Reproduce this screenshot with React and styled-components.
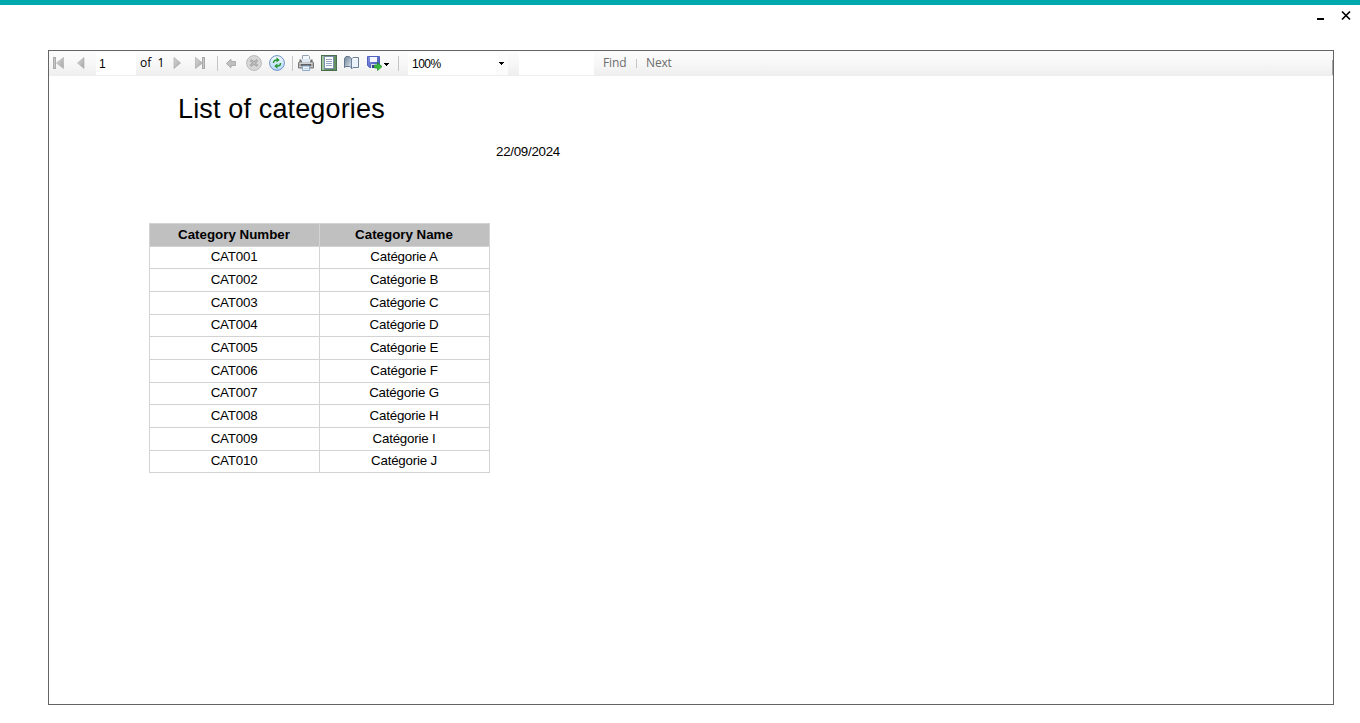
import React from "react";
import styled, { createGlobalStyle } from "styled-components";

const GlobalStyle = createGlobalStyle`
  * { box-sizing: border-box; }
  html, body { margin: 0; padding: 0; background: #fff; }
`;

const Window = styled.div`
  width: 1360px;
  height: 723px;
  display: flex;
  flex-direction: column;
  border-top: 5px solid #00a9ad;
  background: #fff;
  color: #000;
  overflow: hidden;
`;

const TitleBar = styled.div`
  height: 45px;
  flex: none;
  display: flex;
  justify-content: flex-end;
  gap: 17px;
  padding: 5px 9px 0 0;
`;

const Viewer = styled.div`
  width: 1286px;
  height: 655px;
  margin-left: 48px;
  flex: none;
  border: 1px solid #646464;
`;

const Toolbar = styled.div`
  height: 25px;
  display: flex;
  align-items: center;
  padding-left: 1px;
  background: linear-gradient(#fcfcfc, #f8f8f8 45%, #eeeeee);
  font: 12px/24px "Open Sans", "Noto Sans", sans-serif;
`;

const ToolButton = styled.div`
  width: ${(p) => p.$width || 23}px;
  height: 25px;
  flex: none;
  display: flex;
  align-items: center;
  svg { display: block; margin-top: -1px; }
`;

const Separator = styled.div`
  width: 1px;
  height: ${(p) => p.$height || 15}px;
  flex: none;
  margin: 0 ${(p) => p.$after}px 0 ${(p) => p.$before || 0}px;
  background: #c5c5c5;
`;

const Field = styled.div`
  width: ${(p) => p.$width}px;
  height: 22px;
  flex: none;
  display: flex;
  align-items: center;
  justify-content: space-between;
  margin-right: ${(p) => p.$after || 0}px;
  padding-left: ${(p) => p.$inset}px;
  background: #fff;
  font: 12px/22px "Liberation Sans", Arial, sans-serif;
  letter-spacing: ${(p) => p.$spacing || 0}px;
`;

const DropArea = styled.span`
  width: 12px;
  height: 22px;
  display: flex;
  align-items: center;
  justify-content: center;
  padding-right: 2px;
  background: #fcfcfc;
`;

const PageCount = styled.div`
  width: 33px;
  flex: none;
  padding: 0 0 1px 4px;
  white-space: pre;
`;

const TextCommand = styled.div`
  width: ${(p) => p.$width}px;
  flex: none;
  padding-bottom: 1px;
  color: #6d6d6d;
  letter-spacing: -0.15px;
`;

const ToolbarEdge = styled.div`
  width: 1px;
  height: 15px;
  margin-left: auto;
  margin-top: 7px;
  background: #a5a5a5;
`;

const Report = styled.div`
  padding-left: 100px;
  font-family: "Liberation Sans", Arial, sans-serif;
  font-size: 13.33px;
`;

const Title = styled.h1`
  margin: 0;
  padding: 17px 0 0 29px;
  font-size: 27px;
  line-height: 32px;
  font-weight: 400;
  letter-spacing: 0.15px;
`;

const ReportDate = styled.div`
  padding: 18px 0 0 347px;
  line-height: 17px;
  letter-spacing: -0.28px;
`;

const Table = styled.div`
  width: 341px;
  margin-top: 63px;
  border-top: 1px solid #d3d3d3;
  border-left: 1px solid #d3d3d3;
`;

const Row = styled.div`
  display: grid;
  grid-template-columns: 170px 170px;
  height: ${(p) => p.$height}px;
`;

const Cell = styled.div`
  border-right: 1px solid #d3d3d3;
  border-bottom: 1px solid #d3d3d3;
  padding-top: ${(p) => p.$top || 2}px;
  padding-right: 1px;
  line-height: 16px;
  text-align: center;
  letter-spacing: -0.2px;
`;

const HeaderCell = styled(Cell)`
  padding-top: 3px;
  background: #c0c0c0;
  font-weight: 700;
  letter-spacing: 0;
`;

const Icon = ({ children, width = 16 }) => (
  <svg width={width} height="16" viewBox={`0 0 ${width} 16`}>{children}</svg>
);

const Shades = () => (
  <svg width="0" height="0" style={{ position: "absolute" }}>
    <defs>
      <linearGradient id="gray" x1="0" x2="1" y1="0" y2="1">
        <stop offset="0" stopColor="#d8d8d8" />
        <stop offset="1" stopColor="#a4a4a4" />
      </linearGradient>
      <linearGradient id="disc" x1="0" x2="0" y1="0" y2="1">
        <stop offset="0" stopColor="#f2f9ff" />
        <stop offset="1" stopColor="#b4d8fb" />
      </linearGradient>
      <linearGradient id="green" x1="0" x2="1" y1="0" y2="0">
        <stop offset="0" stopColor="#a9cba5" />
        <stop offset="1" stopColor="#5c8a5b" />
      </linearGradient>
      <linearGradient id="page" x1="0" x2="1" y1="0" y2="1">
        <stop offset="0" stopColor="#6f8399" />
        <stop offset="1" stopColor="#dce6f0" />
      </linearGradient>
      <linearGradient id="disk" x1="0" x2="1" y1="0" y2="1">
        <stop offset="0" stopColor="#8596e6" />
        <stop offset="1" stopColor="#3d4fb4" />
      </linearGradient>
    </defs>
  </svg>
);

const FirstIcon = () => (
  <Icon>
    <rect x="3.5" y="2.5" width="2" height="11" fill="#c8c8c8" stroke="#ababab" />
    <path d="M13.5 2.5v11L6.5 8z" fill="url(#gray)" stroke="#b3b3b3" strokeWidth=".7" />
  </Icon>
);
const PrevIcon = () => (
  <Icon><path d="M11 2.5v11L4.5 8z" fill="url(#gray)" stroke="#b3b3b3" strokeWidth=".7" /></Icon>
);
const NextIcon = () => (
  <Icon><path d="M5 2.5v11L11.5 8z" fill="url(#gray)" stroke="#ababab" strokeWidth=".7" /></Icon>
);
const LastIcon = () => (
  <Icon>
    <path d="M3.5 2.5v11l7-5.5z" fill="url(#gray)" stroke="#ababab" strokeWidth=".7" />
    <rect x="10.5" y="2.5" width="2" height="11" fill="#c8c8c8" stroke="#a8a8a8" />
  </Icon>
);
const BackIcon = () => (
  <Icon><path d="M3.3 8.5 8 4.2v2.3h4.5v4H8v2.3z" fill="#c0c0c0" stroke="#a6a6a6" strokeWidth=".9" /></Icon>
);
const StopIcon = () => (
  <Icon>
    <circle cx="8" cy="8" r="7.4" fill="#d8d8d8" stroke="#b8b8b8" />
    <path d="m4.5 5 7 6m0-6-7 6" stroke="#a3a3a3" strokeWidth="2.6" />
    <path d="m5 5.4 6 5.2m0-5.2-6 5.2" stroke="#c4c4c4" strokeWidth="1" />
  </Icon>
);
const RefreshIcon = () => (
  <Icon>
    <circle cx="8" cy="8" r="7.4" fill="url(#disc)" stroke="#6c91c7" />
    <path d="M4.5 8C4.5 5.9 5.7 4.9 8 4.9" fill="none" stroke="#25962d" strokeWidth="1.5" />
    <path d="M7.5 2.3 10.7 4.9 7.5 7.4z" fill="#25962d" />
    <path d="M11.5 8c0 2.1-1.2 3.1-3.5 3.1" fill="none" stroke="#25962d" strokeWidth="1.5" />
    <path d="M8.5 8.6 5.3 11.1l3.2 2.6z" fill="#25962d" />
  </Icon>
);
const PrintIcon = () => (
  <Icon>
    <path d="M4.5 .5h6l1 1v5h-7z" fill="#f4f8fd" stroke="#94a4b5" />
    <path d="M2.5 4.5v2m11-2v2" stroke="#6a6a6a" strokeWidth="2" />
    <path d="M1.5 6.5h13l1 1.5v5H.5V8z" fill="#a9a9a9" stroke="#777" />
    <path d="M4 4h8v3.5H4z" fill="#dce8f4" />
    <path d="M1.5 8.5h13" stroke="#d2d2d2" />
    <path d="M3 9h10v2H3z" fill="#626262" />
    <path d="M1 11.5h14" stroke="#c7c7c7" />
    <path d="M4.5 11v4.5h7V11z" fill="#e6f2fd" stroke="#8dabc8" />
    <path d="M6 13.5h4" stroke="#bfd6eb" />
  </Icon>
);
const LayoutIcon = () => (
  <Icon>
    <rect x=".5" y=".5" width="15" height="15" fill="url(#green)" stroke="#4a6f4e" />
    <path d="M3 15h10" stroke="#456b4a" />
    <rect x="3.5" y="1.5" width="9" height="12" fill="#fff" stroke="#7890ad" />
    <path d="M5 4.5h6m-6 2h6m-6 2h6m-6 2h6" stroke="#8ea4c0" />
  </Icon>
);
const SetupIcon = () => (
  <Icon>
    <path d="M.5 12.5v-9l1.5-2h3l2.5 2v9l-2-1H2z" fill="url(#page)" stroke="#64768a" />
    <path d="M7.5 4 9 2.5h5.5v10H9L7.5 14z" fill="#eaf2fb" stroke="#6b8098" />
    <path d="M9.5 3.5h4" stroke="#fff" />
  </Icon>
);
const SaveIcon = () => (
  <Icon width={23}>
    <path d="M.5 1.5h12v11h-10l-2-2z" fill="url(#disk)" stroke="#5262bd" />
    <path d="M3 2h7v5H3z" fill="#f4f7ff" />
    <path d="M4 9h6v4H4z" fill="#d9dfed" />
    <path d="M5 10h2v3H5z" fill="#33448d" />
    <path d="M7.5 10h3V7.6l4.5 4-4.5 4V13h-3z" fill="#3cba41" stroke="#1b8a22" strokeWidth=".7" />
    <path d="M17 8h5v1h-1v1h-1v1h-1v-1h-1V9h-1z" fill="#000" />
  </Icon>
);
const DropArrow = () => (
  <svg width="5" height="3"><path d="M0 0h5v1H4v1H3v1H2V2H1V1H0z" /></svg>
);
const MinimizeIcon = () => (
  <svg width="7" height="12"><path d="M0 8h7v2H0z" /></svg>
);
const CloseIcon = () => (
  <svg width="10" height="12"><path d="m1 1.5 8 8m0-8-8 8" stroke="#000" strokeWidth="1.7" /></svg>
);

// Row heights and text offsets follow the fractional row pitch of the report.
const categories = "ABCDEFGHIJ".split("").map((letter, i) => ({
  number: `CAT${String(i + 1).padStart(3, "0")}`,
  name: `Catégorie ${letter}`,
  height: i % 3 === 0 ? 22 : 23,
  top: i % 3 === 0 ? 2 : 3,
}));

export default function App() {
  return (
    <Window>
      <GlobalStyle />
      <Shades />
      <TitleBar><MinimizeIcon /><CloseIcon /></TitleBar>
      <Viewer>
        <Toolbar>
          <ToolButton><FirstIcon /></ToolButton>
          <ToolButton><PrevIcon /></ToolButton>
          <Field $width={40} $inset={3}>1</Field>
          <PageCount>of  1</PageCount>
          <ToolButton><NextIcon /></ToolButton>
          <ToolButton><LastIcon /></ToolButton>
          <Separator $before={2} $after={5} />
          <ToolButton><BackIcon /></ToolButton>
          <ToolButton><StopIcon /></ToolButton>
          <ToolButton><RefreshIcon /></ToolButton>
          <Separator $after={5} />
          <ToolButton><PrintIcon /></ToolButton>
          <ToolButton><LayoutIcon /></ToolButton>
          <ToolButton><SetupIcon /></ToolButton>
          <ToolButton $width={31}><SaveIcon /></ToolButton>
          <Separator $after={9} />
          <Field $width={100} $inset={4} $after={11} $spacing={-0.5}>100%<DropArea><DropArrow /></DropArea></Field>
          <Field $width={75} $after={9} />
          <TextCommand $width={33}>Find</TextCommand>
          <Separator $height={9} $after={9} />
          <TextCommand $width={40}>Next</TextCommand>
          <ToolbarEdge />
        </Toolbar>
        <Report>
          <Title>List of categories</Title>
          <ReportDate>22/09/2024</ReportDate>
          <Table>
            <Row $height={23}>
              <HeaderCell>Category Number</HeaderCell>
              <HeaderCell>Category Name</HeaderCell>
            </Row>
            {categories.map((c) => (
              <Row key={c.number} $height={c.height}>
                <Cell $top={c.top}>{c.number}</Cell>
                <Cell $top={c.top}>{c.name}</Cell>
              </Row>
            ))}
          </Table>
        </Report>
      </Viewer>
    </Window>
  );
}
